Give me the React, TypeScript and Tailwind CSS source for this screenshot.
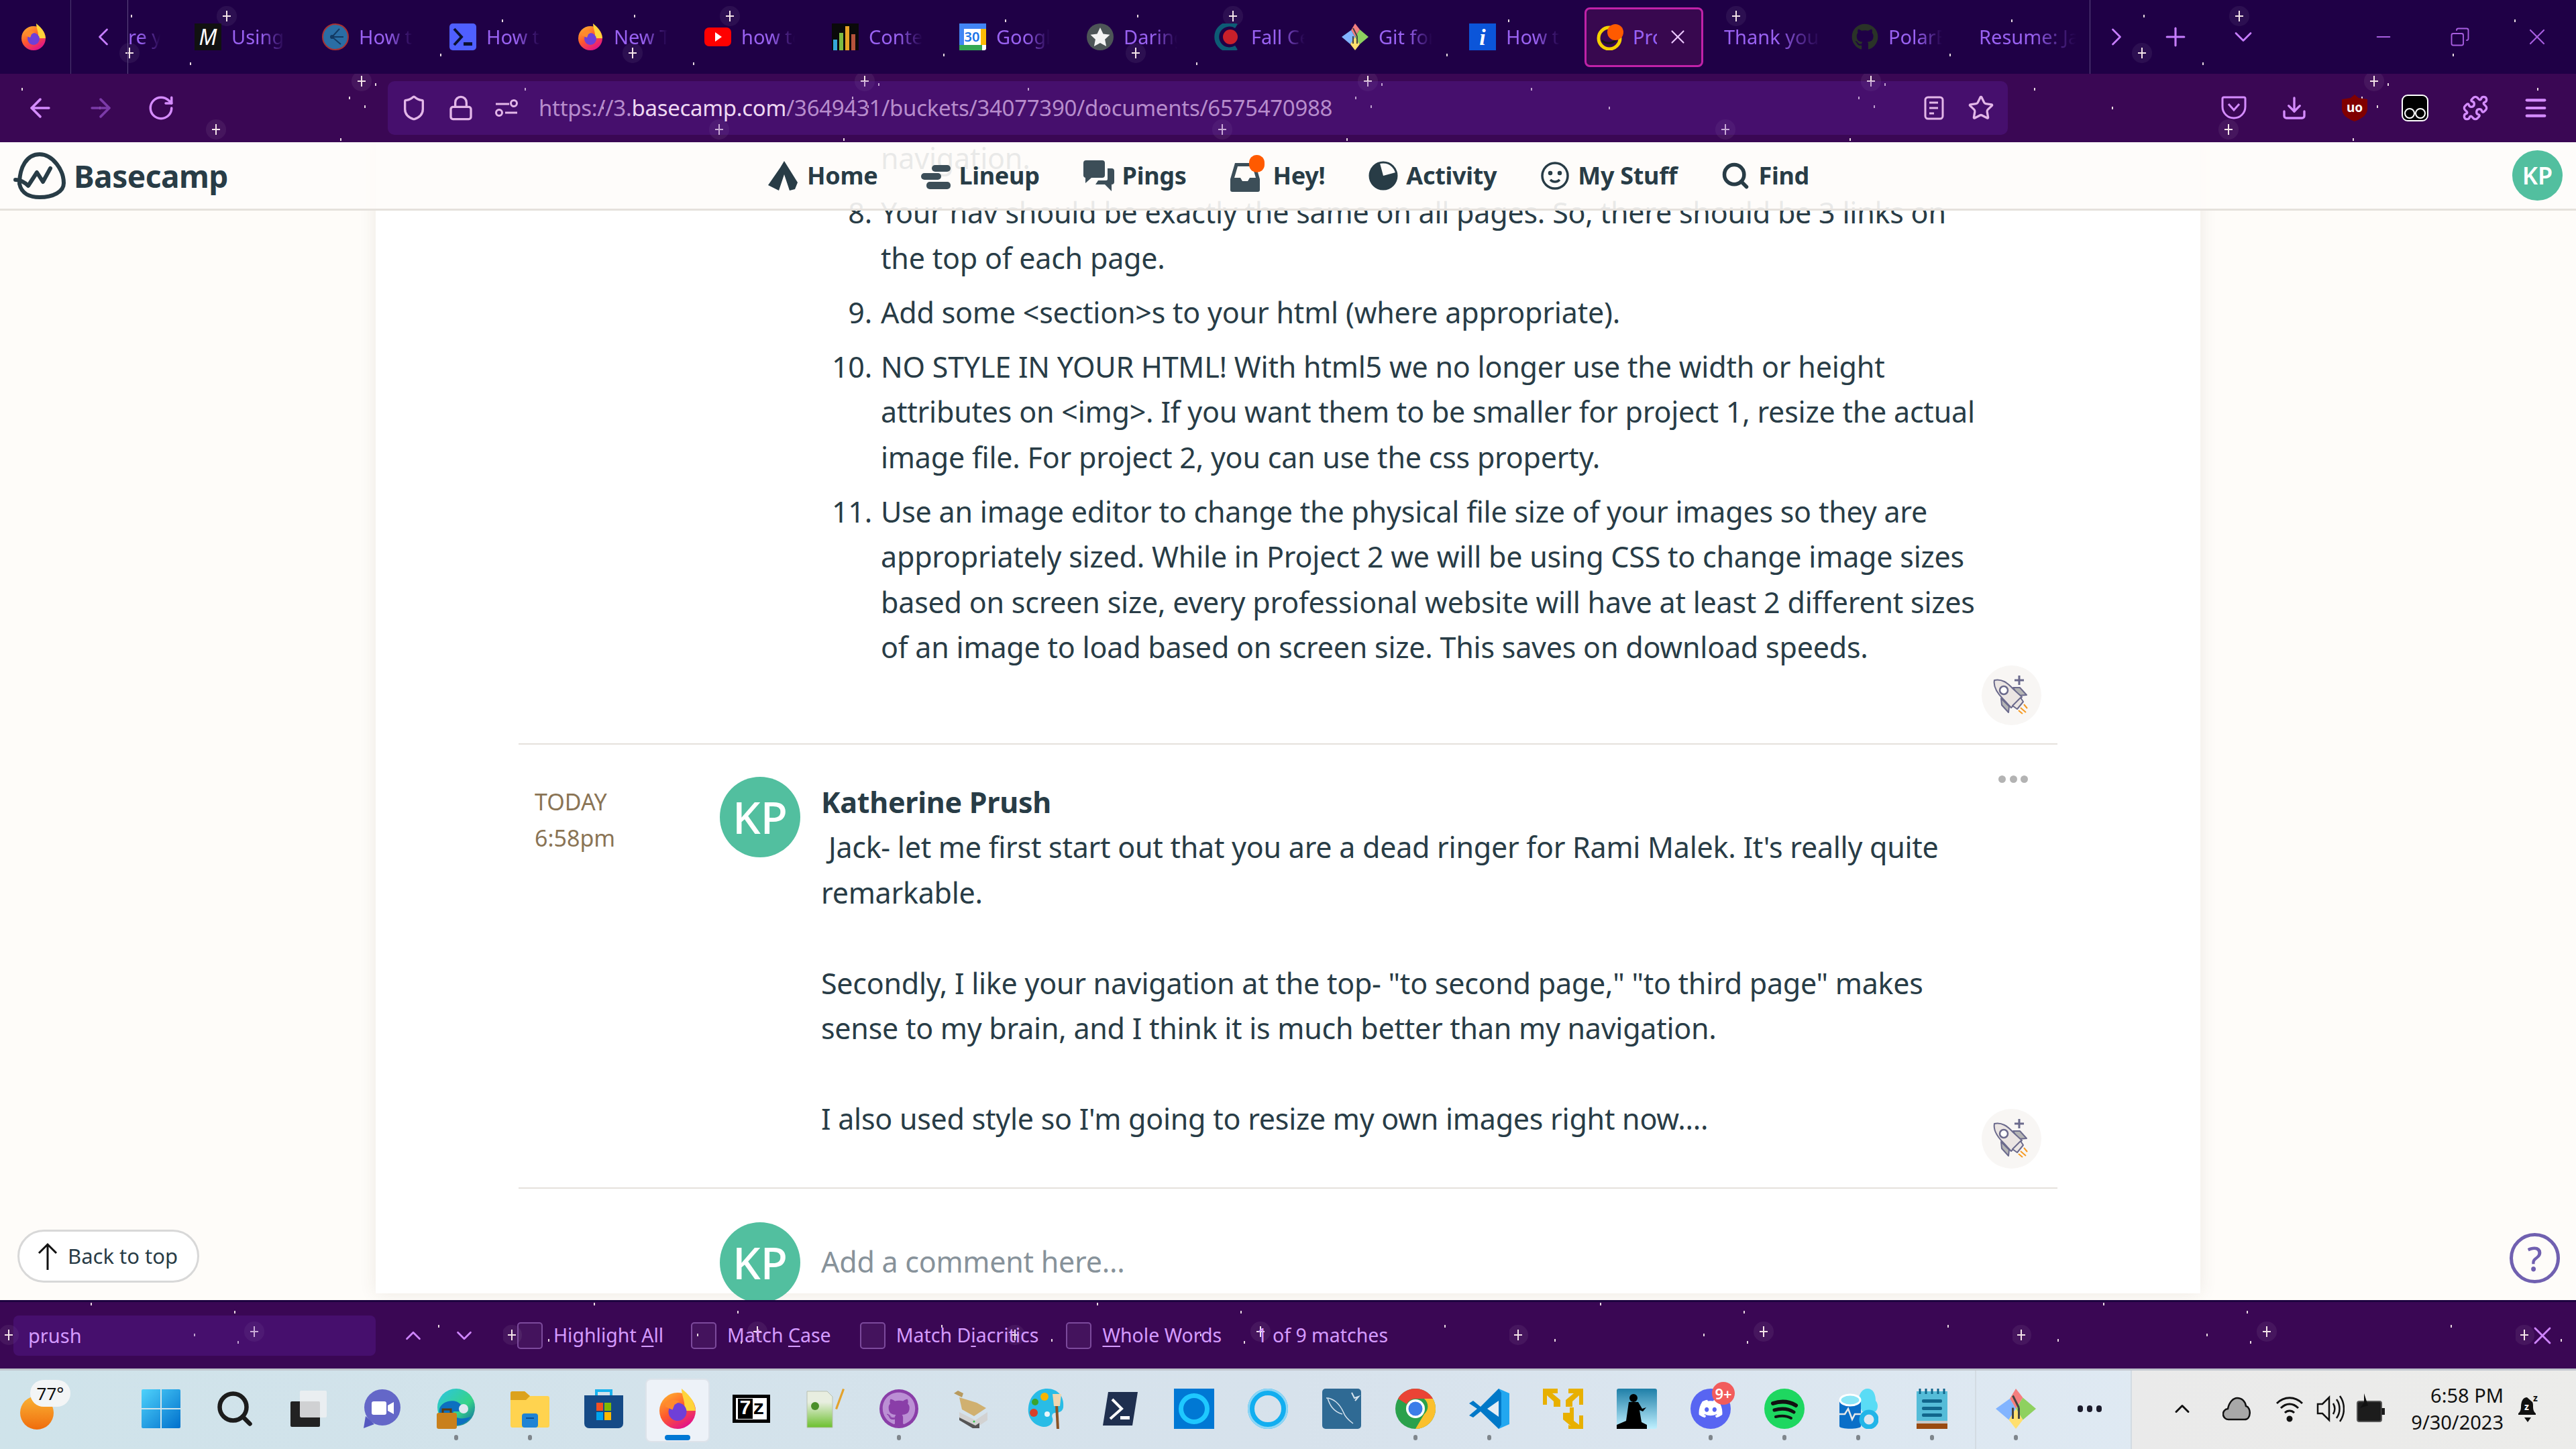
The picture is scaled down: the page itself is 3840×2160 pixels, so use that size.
import { ReactNode } from "react";
import {
  ArrowLeft,
  ArrowRight,
  ChevronDown,
  ChevronLeft,
  ChevronRight,
  ChevronUp,
  Copy,
  Download,
  Lock,
  Menu,
  Minus,
  Plus,
  Puzzle,
  RotateCw,
  Search,
  Shield,
  Star,
  X,
} from "lucide-react";
import { FaDiscord, FaGithub } from "react-icons/fa";

type Pt = [number, number];

const tabStars = { big: [[338, 24], [193, 79]] as Pt[], dots: [[196, 24], [284, 95], [749, 31], [657, 82]] as Pt[] };
const navStars = {
  big: [[539, 11], [322, 83]] as Pt[],
  dots: [[33, 23], [521, 36], [544, 49], [560, 16], [508, 98], [149, 51]] as Pt[],
};
const findStars = {
  big: [[379, 44], [13, 49]] as Pt[],
  dots: [[136, 3], [350, 15], [654, 36], [68, 57], [355, 60], [290, 49]] as Pt[],
};

const StarField = ({ id, stars, height }: { id: string; stars: { big: Pt[]; dots: Pt[] }; height: number }) => (
  <svg className="absolute inset-0 h-full w-full" aria-hidden="true">
    <defs>
      <pattern id={id} width="750" height={height} patternUnits="userSpaceOnUse">
        {stars.big.map(([x, y]) => (
          <g key={`${x}-${y}`}>
            <circle cx={x} cy={y} r="15" fill="#ffffff" opacity="0.06" />
            <path d={`M${x} ${y - 8}V${y + 8}M${x - 6} ${y}H${x + 6}`} stroke="#f4e4e8" strokeWidth="2" />
          </g>
        ))}
        {stars.dots.map(([x, y]) => (
          <rect key={`${x}-${y}`} x={x - 1} y={y - 2} width="2" height="4" fill="#e8d8e0" />
        ))}
      </pattern>
    </defs>
    <rect width="100%" height="100%" fill={`url(#${id})`} />
  </svg>
);

const Firefox = ({ size = 40 }: { size?: number }) => (
  <svg width={size} height={size} viewBox="0 0 40 40">
    <defs>
      <linearGradient id="ffx" x1="0" y1="0" x2="0.6" y2="1">
        <stop offset="0" stopColor="#ffbd2e" />
        <stop offset="0.55" stopColor="#ff5a2c" />
        <stop offset="1" stopColor="#e31587" />
      </linearGradient>
    </defs>
    <circle cx="20" cy="22" r="18" fill="url(#ffx)" />
    <path d="M24 0c6 5 13 11 14 22H26C29 15 24 8 24 0z" fill="#ffd43a" />
    <circle cx="20" cy="23" r="9" fill="#6f3fd8" />
    <path d="M8 14c4-3 9-4 14-1l-5 3-2 5-7-3z" fill="#ff8a2c" />
  </svg>
);

const MIcon = () => (
  <div className="flex h-10 w-10 items-center justify-center bg-[#111111] text-[32px] italic text-white">M</div>
);
const BlueBall = () => (
  <svg width="40" height="40" viewBox="0 0 40 40">
    <circle cx="20" cy="20" r="19" fill="#2a6ea5" stroke="#a83232" strokeWidth="2" />
    <path d="M26 8L15 20l13 11M15 20h17" stroke="#123a63" strokeWidth="2" fill="none" />
    <circle cx="15" cy="20" r="3" fill="#123a63" />
  </svg>
);
const PsTab = () => (
  <svg width="40" height="40" viewBox="0 0 40 40">
    <rect width="40" height="40" rx="5" fill="#4f5fff" />
    <path d="M7 8l11 12L7 32" stroke="#0b1030" strokeWidth="4" fill="none" />
    <rect x="21" y="28" width="13" height="5" fill="#0b1030" />
  </svg>
);
const Youtube = () => (
  <svg width="40" height="40" viewBox="0 0 40 40">
    <rect y="6" width="40" height="28" rx="7" fill="#ff0000" />
    <path d="M16 13l10 7-10 7z" fill="#ffffff" />
  </svg>
);
const Bars = () => (
  <svg width="40" height="40" viewBox="0 0 40 40">
    <rect width="40" height="40" fill="#0a0a0a" />
    <rect x="2" y="24" width="6" height="16" fill="#35a7d8" />
    <rect x="11" y="14" width="6" height="26" fill="#7dbb42" />
    <rect x="20" y="4" width="6" height="36" fill="#e8a325" />
    <rect x="29" y="16" width="6" height="24" fill="#b5533c" />
  </svg>
);
const Calendar = () => (
  <svg width="40" height="40" viewBox="0 0 40 40">
    <rect width="40" height="40" rx="3" fill="#ffffff" />
    <path d="M0 0h40v8H0z" fill="#4285f4" />
    <path d="M0 32h34v8H0z" fill="#34a853" />
    <path d="M32 8h8v24h-8z" fill="#fbbc04" />
    <path d="M0 8h7v24H0z" fill="#4285f4" />
    <text x="19" y="27" textAnchor="middle" fontSize="20" fontWeight="600" fill="#1a73e8">30</text>
  </svg>
);
const StarTab = () => (
  <svg width="40" height="40" viewBox="0 0 40 40">
    <circle cx="20" cy="20" r="20" fill="#4d5557" />
    <path d="M20 6l4.5 9.5 10 1.2-7.4 7 2 10.3L20 29l-9.100 5 2-10.300-7.400-7 10-1.200z" fill="#f3f3f3" />
  </svg>
);
const TargetTab = () => (
  <svg width="40" height="40" viewBox="0 0 40 40">
    <path d="M33 4A19 19 0 1033 36" stroke="#0d5c75" strokeWidth="7" fill="none" />
    <circle cx="24" cy="20" r="11" fill="#c8202a" />
  </svg>
);
const GitDiamond = ({ size = 40 }: { size?: number }) => (
  <svg width={size} height={size} viewBox="0 0 40 40">
    <path d="M20 0l7 9-7 11-6-10z" fill="#f57f7f" />
    <path d="M27 9l13 11-13 11-7-11z" fill="#8ed15f" />
    <path d="M14 10l6 10-7 11L0 20z" fill="#82b4ff" />
    <path d="M13 31l7-11 7 11-7 9z" fill="#ffdf6e" />
    <path d="M17 7l6 12M23 19v11M17 19v11" stroke="#444444" strokeWidth="2" fill="none" />
  </svg>
);
const InfoTab = () => (
  <div className="flex h-10 w-10 items-center justify-center bg-[#0b55d9] font-['Liberation_Serif',serif] text-[34px] font-bold italic text-white">i</div>
);
const Swirl = () => (
  <svg width="40" height="40" viewBox="0 0 40 40">
    <circle cx="19" cy="22" r="16" fill="none" stroke="#f5d000" strokeWidth="5" />
    <path d="M8 25c6 6 16 6 22-2" stroke="#161616" strokeWidth="3" fill="none" />
    <circle cx="28" cy="13" r="12" fill="#ff5a00" />
  </svg>
);
const GithubTab = () => <FaGithub className="h-10 w-10 text-[#2a3328]" />;

const tabs: { icon?: ReactNode; label: string }[] = [
  { icon: <MIcon />, label: "Using a" },
  { icon: <BlueBall />, label: "How to" },
  { icon: <PsTab />, label: "How to" },
  { icon: <Firefox />, label: "New Tab" },
  { icon: <Youtube />, label: "how to" },
  { icon: <Bars />, label: "Content" },
  { icon: <Calendar />, label: "Google" },
  { icon: <StarTab />, label: "Daring" },
  { icon: <TargetTab />, label: "Fall Ce" },
  { icon: <GitDiamond />, label: "Git for" },
  { icon: <InfoTab />, label: "How to" },
];

const Tab = ({ icon, label, wide }: { icon?: ReactNode; label: string; wide?: boolean }) => (
  <div className="relative flex w-[190px] shrink-0 items-center gap-[15px] pl-[18px]">
    {icon}
    <span
      className={`overflow-hidden whitespace-nowrap text-[29px] text-[#9a62f2] [mask-image:linear-gradient(to_right,black_55%,transparent)] ${
        wide ? "w-[145px]" : "w-[80px]"
      }`}
    >
      {label}
    </span>
  </div>
);

const TabBar = () => (
  <div className="relative flex h-[110px] shrink-0 bg-[#1f0046]">
    <StarField id="tabstars" stars={tabStars} height={110} />
    <div className="relative flex w-[106px] items-center justify-center border-r border-[#4d3a70] pr-[6px]">
      <Firefox />
    </div>
    <div className="relative flex w-[85px] items-center border-r border-[#5d4a80] pl-[26px] text-[#c77dff]">
      <ChevronLeft size={44} strokeWidth={1.5} />
    </div>
    <div className="relative flex w-[2925px] items-center overflow-hidden border-r border-[#5d4a80]">
      <div className="w-[81px] shrink-0">
        <div className="w-[48px] overflow-hidden whitespace-nowrap text-[29px] text-[#9a62f2] [mask-image:linear-gradient(to_right,black_40%,transparent)]">re you</div>
      </div>
      {tabs.map((t, i) => (
        <Tab key={i} icon={t.icon} label={t.label} />
      ))}
      <div className="flex h-[89px] w-[177px] shrink-0 items-center gap-[14px] rounded-[8px] border-[3px] border-[#c022a8] bg-[#38084f] pl-[15px]">
        <Swirl />
        <span className="w-[36px] overflow-hidden whitespace-nowrap text-[29px] text-[#9a62f2]">Proj</span>
        <X size={34} strokeWidth={1.5} className="text-[#ecc8ff]" />
      </div>
      <div className="w-[13px] shrink-0" />
      <Tab label="Thank you" wide />
      <Tab icon={<GithubTab />} label="PolarBear" />
      <Tab label="Resume: Jack" wide />
    </div>
    <div className="relative flex flex-1 items-center text-[#c77dff]">
      <div className="flex w-[78px] justify-center"><ChevronRight size={44} strokeWidth={1.5} /></div>
      <div className="flex w-[98px] justify-center"><Plus size={44} strokeWidth={1.7} /></div>
      <div className="flex w-[104px] justify-center"><ChevronDown size={44} strokeWidth={1.5} /></div>
      <div className="ml-auto flex w-[114px] justify-center text-[#a85ee0]"><Minus size={32} strokeWidth={1.5} /></div>
      <div className="flex w-[114px] justify-center text-[#a85ee0]"><Copy size={30} strokeWidth={1.5} className="-scale-x-100" /></div>
      <div className="flex w-[116px] justify-center text-[#a85ee0]"><X size={40} strokeWidth={1.3} /></div>
    </div>
  </div>
);

const Reader = () => (
  <svg width="36" height="36" viewBox="0 0 36 36" fill="none" stroke="#e3b7e8" strokeWidth="3">
    <rect x="5" y="2" width="26" height="32" rx="4" />
    <path d="M11 10h13M11 18h13M11 26h7" />
  </svg>
);
const Sliders = () => (
  <svg width="36" height="36" viewBox="0 0 36 36" fill="none" stroke="#e3b7e8" strokeWidth="3">
    <path d="M2 12h20M16 25h18" />
    <circle cx="29" cy="11" r="4.500" />
    <circle cx="7" cy="25" r="4.500" />
  </svg>
);
const Pocket = () => (
  <svg width="38" height="38" viewBox="0 0 38 38" fill="none" stroke="#d58cff" strokeWidth="3">
    <path d="M4 4h30a2 2 0 012 2v12c0 10-8 17-17 17S2 28 2 18V6a2 2 0 012-2z" />
    <path d="M11 14l8 9 8-9" />
  </svg>
);
const Ublock = () => (
  <svg width="38" height="40" viewBox="0 0 38 40">
    <path d="M19 0l6 5 13 2v14c0 9-8 15-19 19C8 36 0 30 0 21V7l13-2z" fill="#800000" />
    <text x="19" y="26" textAnchor="middle" fontSize="19" fontWeight="700" fill="#ffffff">uo</text>
  </svg>
);
const Glasses = () => (
  <svg width="40" height="40" viewBox="0 0 40 40">
    <rect x="1" y="1" width="38" height="38" rx="8" fill="#000000" stroke="#ffffff" strokeWidth="2" />
    <circle cx="12" cy="28" r="7" fill="none" stroke="#ffffff" strokeWidth="2" />
    <circle cx="28" cy="28" r="7" fill="none" stroke="#ffffff" strokeWidth="2" />
  </svg>
);

const navRight: ReactNode[] = [
  <Pocket key="pocket" />,
  <Download key="dl" size={40} strokeWidth={2} />,
  <Ublock key="ub" />,
  <Glasses key="gl" />,
  <Puzzle key="pz" size={40} strokeWidth={2} />,
  <Menu key="menu" size={40} strokeWidth={2.5} />,
];

const NavBar = () => (
  <div className="relative flex h-[102px] shrink-0 items-center bg-[#3a0754] text-[#d58cff]">
    <StarField id="navstars" stars={navStars} height={102} />
    <div className="relative ml-[15px] flex w-[90px] justify-center"><ArrowLeft size={44} strokeWidth={2} /></div>
    <div className="relative flex w-[90px] justify-center text-[#7b3aa8]"><ArrowRight size={44} strokeWidth={2} /></div>
    <div className="relative flex w-[90px] justify-center"><RotateCw size={42} strokeWidth={2} /></div>
    <div className="relative ml-[293px] flex h-[80px] w-[2415px] items-center rounded-[10px] bg-[#6423aa]/30 text-[#e3b7e8]">
      <div className="ml-[19px] flex w-[70px]"><Shield size={40} strokeWidth={2} /></div>
      <div className="flex w-[70px]"><Lock size={40} strokeWidth={2} /></div>
      <div className="flex w-[66px]"><Sliders /></div>
      <span className="whitespace-nowrap text-[33px] tracking-[-0.3px] text-[#b78ccc]">
        https://3.<span className="text-[#eed8f2]">basecamp.com</span>/3649431/buckets/34077390/documents/6575470988
      </span>
      <div className="ml-auto flex w-[70px] justify-center"><Reader /></div>
      <div className="mr-[5px] flex w-[70px] justify-center"><Star size={40} strokeWidth={2} /></div>
    </div>
    <div className="relative ml-[292px] flex">
      {navRight.map((icon, i) => (
        <div key={i} className="flex w-[90px] justify-center">{icon}</div>
      ))}
    </div>
  </div>
);

const BasecampLogo = () => (
  <svg width="78" height="70" viewBox="0 0 78 70" fill="none" stroke="#283c46" strokeWidth="6" strokeLinecap="round" strokeLinejoin="round">
    <path d="M9 47C9 22 20 3 39 3c20 0 36 24 36 43 0 13-16 21-36 21-14 0-27-5-30-20" />
    <path d="M3 41c8 0 14 4 19 9l13-20 9 14 11-20" />
  </svg>
);

const HomeIcon = () => (
  <svg width="48" height="48" viewBox="0 0 48 48">
    <path d="M26 2l20 32-4 10-8 2-8-24-8 24-16-8L20 12z" fill="#283c46" />
  </svg>
);
const LineupIcon = () => (
  <svg width="44" height="44" viewBox="0 0 44 44" fill="#3c4e58">
    <rect x="16" y="6" width="28" height="10" rx="5" />
    <rect y="18" width="30" height="10" rx="5" />
    <rect x="8" y="31" width="36" height="11" rx="5" />
  </svg>
);
const PingsIcon = () => (
  <svg width="46" height="46" viewBox="0 0 46 46" fill="#3c4e58">
    <path d="M4 0h24a4 4 0 014 4v18a4 4 0 01-4 4H12l-9 8V26a4 4 0 01-3-4V4a4 4 0 014-4z" />
    <path d="M36 12h6a4 4 0 014 4v16a4 4 0 01-4 4v10l-10-10H18l4-6h12a2 2 0 002-2z" />
  </svg>
);
const HeyIcon = () => (
  <div className="relative h-[50px] w-[52px]">
    <svg width="46" height="46" viewBox="0 0 46 46" className="absolute bottom-0 left-0">
      <path d="M8 2h30l7 24v16a3 3 0 01-3 3H4a3 3 0 01-3-3V26z" fill="#3c4e58" />
      <path d="M12 7h22l5 17H30l-3 5h-8l-3-5H7z" fill="#fefcf9" />
    </svg>
    <div className="absolute -top-[6px] right-0 h-[26px] w-[23px] rounded-full bg-[#ff5a00]" />
  </div>
);
const ActivityIcon = () => (
  <svg width="44" height="44" viewBox="0 0 44 44">
    <circle cx="22" cy="22" r="20" fill="none" stroke="#283c46" strokeWidth="3" />
    <path d="M22 2a20 20 0 1020 20H22z" fill="#283c46" transform="rotate(-15 22 22)" />
  </svg>
);
const StuffIcon = () => (
  <svg width="44" height="44" viewBox="0 0 44 44" fill="none" stroke="#283c46" strokeWidth="3.500">
    <circle cx="22" cy="22" r="19" />
    <circle cx="15" cy="18" r="1.500" />
    <circle cx="29" cy="18" r="1.500" />
    <path d="M15 28c4 4 10 4 14 0" />
  </svg>
);

const navItems: { icon: ReactNode; label: string }[] = [
  { icon: <HomeIcon />, label: "Home" },
  { icon: <LineupIcon />, label: "Lineup" },
  { icon: <PingsIcon />, label: "Pings" },
  { icon: <HeyIcon />, label: "Hey!" },
  { icon: <ActivityIcon />, label: "Activity" },
  { icon: <StuffIcon />, label: "My Stuff" },
  { icon: <Search size={44} strokeWidth={3} className="text-[#283c46]" />, label: "Find" },
];

const Header = () => (
  <div className="absolute inset-x-0 top-0 z-10 grid h-[102px] grid-cols-[1fr_auto_1fr] items-center border-b-[3px] border-[#e5e1dc] bg-[#fefcf9]/90">
    <div className="flex items-center gap-[12px] pl-[20px]">
      <BasecampLogo />
      <span className="text-[46px] font-bold leading-none tracking-[-0.5px] text-[#283c46]">Basecamp</span>
    </div>
    <div className="flex items-center gap-[65px]">
      {navItems.map((item) => (
        <div key={item.label} className="flex items-center gap-[12px]">
          {item.icon}
          <span className="whitespace-nowrap text-[36px] font-bold tracking-[-0.3px] text-[#283c46]">{item.label}</span>
        </div>
      ))}
    </div>
    <div className="flex justify-end pr-[20px]">
      <div className="flex h-[75px] w-[75px] items-center justify-center rounded-full bg-[#52bf9f] text-[36px] font-semibold text-white">KP</div>
    </div>
  </div>
);

const listItems: { n: string; lines: string[] }[] = [
  { n: "", lines: ["navigation."] },
  { n: "8.", lines: ["Your nav should be exactly the same on all pages. So, there should be 3 links on", "the top of each page."] },
  { n: "9.", lines: ["Add some <section>s to your html (where appropriate)."] },
  {
    n: "10.",
    lines: [
      "NO STYLE IN YOUR HTML! With html5 we no longer use the width or height",
      "attributes on <img>. If you want them to be smaller for project 1, resize the actual",
      "image file. For project 2, you can use the css property.",
    ],
  },
  {
    n: "11.",
    lines: [
      "Use an image editor to change the physical file size of your images so they are",
      "appropriately sized. While in Project 2 we will be using CSS to change image sizes",
      "based on screen size, every professional website will have at least 2 different sizes",
      "of an image to load based on screen size. This saves on download speeds.",
    ],
  },
];

const commentLines = [
  "\u00a0Jack- let me first start out that you are a dead ringer for Rami Malek. It's really quite",
  "remarkable.",
  "",
  'Secondly, I like your navigation at the top- "to second page," "to third page" makes',
  "sense to my brain, and I think it is much better than my navigation.",
  "",
  "I also used style so I'm going to resize my own images right now....",
];

const Rocket = () => (
  <div className="h-[89px] w-[89px] shrink-0 rounded-full bg-[#f8f6f4]">
    <svg width="89" height="89" viewBox="0 0 89 89" stroke="#6b6a8c" strokeWidth="2" strokeLinejoin="round">
      <path d="M47 33l10 0 10 11-13 1z" fill="#b5b5b5" />
      <path d="M29 49l1 10 10 11 1-9z" fill="#b5b5b5" />
      <path d="M19 22c11-2 19 3 28 13l13 12-16 16-12-13C24 42 17 32 19 22z" fill="#ebe5e3" />
      <path d="M58 48l4 6-9 11-7-5z" fill="#ebe5e3" />
      <circle cx="33" cy="37" r="6" fill="#ffffff" strokeWidth="2.500" />
      <path d="M56 15v14M49 22h14" strokeWidth="3" fill="none" />
      <path d="M55 67l6 5M58 63l8 7M63 58l5 6" stroke="#f59a23" strokeWidth="2" fill="none" />
    </svg>
  </div>
);

const Avatar = () => (
  <div className="flex h-[120px] w-[120px] shrink-0 items-center justify-center rounded-full bg-[#52bf9f] text-[66px] font-medium text-white">KP</div>
);

const Card = () => (
  <div className="mx-auto h-full w-[2720px] bg-white px-[213px] shadow-[0_0_24px_rgba(90,70,40,0.1)]">
    <div className="-mt-[10px] flex flex-col gap-[13.5px] text-[43px] leading-[67.5px] tracking-[-0.22px] text-[#283c46]">
      {listItems.map((item, i) => (
        <div key={i} className="flex whitespace-nowrap">
          <div className="ml-[457px] mr-[13px] w-[70px] text-right">{item.n}</div>
          <div>
            {item.lines.map((line) => (
              <div key={line}>{line}</div>
            ))}
          </div>
        </div>
      ))}
    </div>
    <div className="-mt-[7px] flex justify-end pr-[24px]">
      <Rocket />
    </div>
    <div className="mt-[27px] flex border-t-2 border-[#e5e1dc] pb-[28px] pl-[24px] pr-[24px] pt-[46px]">
      <div className="mt-[12px] w-[276px] shrink-0 text-[34px] leading-[54px] text-[#8a7455]">
        <div>TODAY</div>
        <div>6:58pm</div>
      </div>
      <div className="mt-[2px]"><Avatar /></div>
      <div className="ml-[31px] mt-[6px] flex-1 whitespace-nowrap pb-[40px] text-[43px] leading-[67.5px] tracking-[-0.26px] text-[#283c46]">
        <div className="font-bold">Katherine Prush</div>
        {commentLines.map((line, i) => (
          <div key={i} className="h-[67.5px]">{line}</div>
        ))}
      </div>
      <div className="flex flex-col items-end justify-between">
        <div className="mr-[20px] flex gap-[5.5px]">
          <span className="h-[11px] w-[11px] rounded-full bg-[#b3b3b3]" />
          <span className="h-[11px] w-[11px] rounded-full bg-[#b3b3b3]" />
          <span className="h-[11px] w-[11px] rounded-full bg-[#b3b3b3]" />
        </div>
        <Rocket />
      </div>
    </div>
    <div className="flex items-center border-t-2 border-[#e5e1dc] pl-[300px] pt-[50px]">
      <Avatar />
      <span className="ml-[31px] text-[43px] tracking-[-0.26px] text-[#87929a]">Add a comment here...</span>
    </div>
  </div>
);

const MainArea = () => (
  <div className="relative min-h-0 flex-1 overflow-hidden bg-[#fefcf9]">
    <Header />
    <Card />
    <div className="absolute left-[26px] top-[1621px] z-10 flex h-[79px] w-[271px] items-center gap-[14px] rounded-full border-[3px] border-[#d8d8d8] bg-white pl-[26px] text-[31px] text-[#283c46]">
      <svg width="32" height="42" viewBox="0 0 32 42" fill="none" stroke="#111111" strokeWidth="3">
        <path d="M16 41V3M3 16L16 3l13 13" />
      </svg>
      Back to top
    </div>
    <div className="absolute left-[3741px] top-[1626px] z-10 flex h-[75px] w-[75px] items-center justify-center rounded-full border-[5px] border-[#7060b0] text-[50px] font-medium leading-none text-[#7060b0]">?</div>
  </div>
);

const findOptions: { before: string; key: string; after: string; gap: number }[] = [
  { before: "Highlight ", key: "A", after: "ll", gap: 0 },
  { before: "Match ", key: "C", after: "ase", gap: 41 },
  { before: "Match D", key: "i", after: "acritics", gap: 43 },
  { before: "", key: "W", after: "hole Words", gap: 41 },
];

const FindBar = () => (
  <div className="relative flex h-[102px] shrink-0 items-center border-t-[3px] border-[#1c0340] bg-[#3a0754] text-[28.5px] text-[#d59bff]">
    <StarField id="findstars" stars={findStars} height={102} />
    <div className="relative ml-[20px] flex h-[60px] w-[540px] items-center rounded-[8px] bg-[#6423aa]/30 pl-[22px] text-[29px]">prush</div>
    <div className="relative ml-[18px] flex w-[76px] justify-center text-[#cf85ff]"><ChevronUp size={38} strokeWidth={1.7} /></div>
    <div className="relative flex w-[76px] justify-center text-[#cf85ff]"><ChevronDown size={38} strokeWidth={1.7} /></div>
    <div className="relative ml-[-10px] flex items-center pl-[51px]">
      {findOptions.map((opt) => (
        <div key={opt.key} className="flex items-center gap-[16px] whitespace-nowrap" style={{ marginLeft: opt.gap }}>
          <span className="h-[40px] w-[38px] rounded-[5px] border-[2px] border-[#7c4a9c] bg-[#ffffff]/5" />
          <span>
            {opt.before}
            <span className="underline underline-offset-[5px]">{opt.key}</span>
            {opt.after}
          </span>
        </div>
      ))}
      <span className="ml-[52px] whitespace-nowrap">1 of 9 matches</span>
    </div>
    <div className="relative ml-auto mr-[28px] text-[#cf85ff]"><X size={44} strokeWidth={1.5} /></div>
  </div>
);

const Start = () => (
  <svg width="58" height="58" viewBox="0 0 58 58">
    <defs>
      <linearGradient id="win" x1="0" y1="0" x2="1" y2="1">
        <stop offset="0" stopColor="#4fd2fb" />
        <stop offset="1" stopColor="#0070cc" />
      </linearGradient>
    </defs>
    <path d="M0 2a2 2 0 012-2h26v28H0zM30 0h26a2 2 0 012 2v26H30zM0 30h28v28H2a2 2 0 01-2-2zM30 30h28v26a2 2 0 01-2 2H30z" fill="url(#win)" />
  </svg>
);
const TaskView = () => (
  <svg width="58" height="58" viewBox="0 0 58 58">
    <rect x="2" y="18" width="44" height="38" rx="2" fill="#222222" />
    <rect x="16" y="2" width="40" height="40" rx="2" fill="#eef0f2" opacity="0.85" />
  </svg>
);
const Meet = () => (
  <svg width="58" height="58" viewBox="0 0 58 58">
    <circle cx="29" cy="27" r="27" fill="#6467c8" />
    <path d="M4 40l-3 18 16-6z" fill="#5458c0" />
    <rect x="13" y="18" width="22" height="20" rx="3" fill="#ffffff" />
    <path d="M37 24l9-5v18l-9-5z" fill="#ffffff" />
  </svg>
);
const Edge = () => (
  <svg width="60" height="60" viewBox="0 0 60 60">
    <defs>
      <linearGradient id="edg" x1="0" y1="0" x2="1" y2="1">
        <stop offset="0" stopColor="#2bc4e4" />
        <stop offset="0.6" stopColor="#37d487" />
        <stop offset="1" stopColor="#0c5ea8" />
      </linearGradient>
    </defs>
    <circle cx="30" cy="28" r="28" fill="url(#edg)" />
    <path d="M5 30c4-12 24-16 32-6 3 4 2 8-2 10H26c-3 8 8 14 26 8-8 12-22 16-34 10C8 46 3 40 5 30z" fill="#0c6fc0" />
    <circle cx="41" cy="30" r="7" fill="#dfe8f0" />
    <rect x="1" y="36" width="30" height="24" rx="3" fill="#c9801c" />
    <path d="M10 36v-5h12v5" stroke="#5a3a10" strokeWidth="3" fill="none" />
  </svg>
);
const Explorer = () => (
  <svg width="58" height="58" viewBox="0 0 58 58">
    <path d="M0 6a3 3 0 013-3h18l8 7h26a3 3 0 013 3v41a3 3 0 01-3 3H3a3 3 0 01-3-3z" fill="#ffd34f" />
    <path d="M0 6a3 3 0 013-3h18l8 7-6 6H0z" fill="#dca21c" />
    <rect x="17" y="36" width="24" height="21" rx="4" fill="#1f83d4" />
    <path d="M23 43h12" stroke="#0b4f90" strokeWidth="2" />
  </svg>
);
const Store = () => (
  <svg width="58" height="60" viewBox="0 0 58 60">
    <path d="M18 12V3h22v9" stroke="#18b2ee" strokeWidth="4" fill="none" />
    <path d="M0 10h58v42a7 7 0 01-7 7H7a7 7 0 01-7-7z" fill="#154a86" />
    <rect x="18" y="21" width="10" height="12" fill="#f25022" />
    <rect x="30" y="21" width="10" height="12" fill="#7fba00" />
    <rect x="18" y="35" width="10" height="12" fill="#00a4ef" />
    <rect x="30" y="35" width="10" height="12" fill="#ffb900" />
  </svg>
);
const SevenZip = () => (
  <div className="flex h-[42px] w-[56px] items-center justify-center border-[5px] border-black bg-white">
    <span className="bg-black px-[2px] font-['Liberation_Mono',monospace] text-[30px] font-bold leading-none text-white">7</span>
    <span className="font-['Liberation_Mono',monospace] text-[30px] font-bold leading-none text-black">z</span>
  </div>
);
const NotepadPP = () => (
  <svg width="58" height="60" viewBox="0 0 58 60">
    <defs>
      <linearGradient id="npp" x1="0" y1="0" x2="0" y2="1">
        <stop offset="0.3" stopColor="#e8eee0" />
        <stop offset="1" stopColor="#6cc02e" />
      </linearGradient>
    </defs>
    <path d="M2 4h30l8 8v46H2z" fill="url(#npp)" stroke="#b9c0b0" />
    <path d="M44 30l11-30 3 1-11 30z" fill="#e3a22c" />
    <circle cx="14" cy="26" r="6" fill="#4b8f2a" />
  </svg>
);
const GithubDesktop = () => (
  <div className="flex h-[58px] w-[58px] items-center justify-center rounded-full bg-[#8a3ea8]">
    <FaGithub className="h-[50px] w-[50px] text-[#bb8fd4]" />
  </div>
);
const Printer = () => (
  <svg width="56" height="58" viewBox="0 0 56 58">
    <path d="M0 6l6-4 8 4-2 6z" fill="#b89a5e" />
    <path d="M8 12l26 8 14 8-18 12-18-10z" fill="#d0b070" />
    <path d="M8 34l24 12 18-12v12L32 58 8 46z" fill="#d2d2d2" />
    <path d="M8 42l24 12 6-4v8H28L8 46z" fill="#555555" />
    <circle cx="30" cy="48" r="1.500" fill="#35c24a" />
  </svg>
);
const Paint = () => (
  <svg width="58" height="60" viewBox="0 0 58 60">
    <path d="M30 0c16 0 26 12 24 28-1 6-6 8-12 8-4 0-6 4-4 8 2 6-4 14-14 13C10 55 0 43 2 28 4 10 16 0 30 0z" fill="#29bce6" />
    <circle cx="26" cy="12" r="6" fill="#f7b500" />
    <circle cx="12" cy="20" r="5" fill="#3aa32c" />
    <circle cx="10" cy="36" r="6" fill="#d8402a" />
    <circle cx="30" cy="38" r="4" fill="#eaf6fb" />
    <path d="M44 24l2 36" stroke="#8a5324" strokeWidth="4" />
    <path d="M38 8h13l-2 18h-9z" fill="#f0d6b0" />
  </svg>
);
const PowerShell = () => (
  <svg width="56" height="54" viewBox="0 0 56 54">
    <path d="M10 2h44L46 52H2z" fill="#1f2f4f" />
    <path d="M16 13l14 14-17 15" stroke="#ffffff" strokeWidth="4" fill="none" />
    <rect x="28" y="38" width="14" height="5" fill="#ffffff" />
  </svg>
);
const Alexa = () => (
  <div className="flex h-[60px] w-[60px] items-center justify-center bg-[#0078d4]">
    <div className="h-[46px] w-[46px] rounded-full border-[7px] border-[#1ec8ff]" />
  </div>
);
const Cortana = () => <div className="h-[60px] w-[60px] rounded-full border-[10px] border-[#12aef0] outline-[3px] -outline-offset-[3px] outline-[#8ed6f5]" />;
const Mysql = () => (
  <svg width="58" height="60" viewBox="0 0 58 60">
    <rect width="58" height="60" rx="5" fill="#2f6a94" />
    <path d="M6 14c10 0 20 8 26 22 2 6 6 10 14 16M8 14c3 10 8 20 22 24" stroke="#d5e3ee" strokeWidth="1.500" fill="none" />
    <path d="M44 6l4 8 6-2-5 6" stroke="#d5e3ee" strokeWidth="2" fill="none" />
  </svg>
);
const Chrome = () => (
  <svg width="60" height="60" viewBox="0 0 60 60">
    <circle cx="30" cy="30" r="30" fill="#2aa14c" />
    <path d="M30 0a30 30 0 0126 15H30a15 15 0 00-13 8L4 15A30 30 0 0130 0z" fill="#ea4335" />
    <path d="M56 15a30 30 0 01-26 45l13-22a15 15 0 000-23z" fill="#fbc02d" />
    <circle cx="30" cy="30" r="14" fill="#ffffff" />
    <circle cx="30" cy="30" r="10.500" fill="#3b7de9" />
  </svg>
);
const Vscode = () => (
  <svg width="60" height="60" viewBox="0 0 60 60">
    <path d="M44 0l16 7v46l-16 7z" fill="#22a7f0" />
    <path d="M44 0L17 27 6 18l-6 4 12 8L0 40l6 3 11-9 27 26 4-6V6z" fill="#0078c8" />
    <path d="M44 18v24L27 30z" fill="#e4edf5" />
  </svg>
);
const YellowApp = () => (
  <svg width="60" height="60" viewBox="0 0 60 60" fill="#e8b000">
    <path d="M0 0h22v7H14l12 10v10H16v-8L6 10v14H0zM38 0h22v24h-6V10L44 19v8H34V17L46 7h-8zM30 36h10v-8h6v20l8 6V40h6v20H38v-6l4 2-12-10z" />
  </svg>
);
const Kindle = () => (
  <svg width="60" height="60" viewBox="0 0 60 60">
    <defs>
      <linearGradient id="knd" x1="0" y1="0" x2="0" y2="1">
        <stop offset="0" stopColor="#1f7fa8" />
        <stop offset="1" stopColor="#bff0ff" />
      </linearGradient>
    </defs>
    <rect width="60" height="60" rx="3" fill="url(#knd)" />
    <circle cx="25" cy="14" r="6" fill="#000000" />
    <path d="M18 20h14l6 10 6-2-5 6-5-2 3 18 8 4v6H0v-6l14-6 2-14z" fill="#000000" />
  </svg>
);
const Discord = () => (
  <div className="relative flex h-[60px] w-[60px] items-center justify-center rounded-full bg-[#5865f2]">
    <FaDiscord className="h-[38px] w-[38px] text-white" />
    <div className="absolute -right-[6px] -top-[10px] flex h-[34px] w-[34px] items-center justify-center rounded-full bg-[#f25c5c] text-[22px] font-semibold text-white">9+</div>
  </div>
);
const Spotify = () => (
  <svg width="60" height="60" viewBox="0 0 60 60" fill="none" stroke="#111111" strokeLinecap="round">
    <circle cx="30" cy="30" r="30" fill="#1ed760" stroke="none" />
    <path d="M13 22c12-4 24-3 34 3" strokeWidth="6" />
    <path d="M15 32c10-3 21-2 29 3" strokeWidth="5" />
    <path d="M17 42c8-2 16-2 23 2" strokeWidth="4" />
  </svg>
);
const Azure = () => (
  <svg width="60" height="60" viewBox="0 0 60 60">
    <path d="M30 22c0-14 6-22 14-22s12 8 12 18c4 4 4 12 0 16H36z" fill="#5adcf5" />
    <path d="M2 18h32v38c0 5-32 5-32 0z" fill="#0a6fc8" />
    <ellipse cx="18" cy="17" rx="15" ry="8" fill="#8be6f7" stroke="#ffffff" strokeWidth="3" />
    <path d="M2 38h8l5-8 6 16 4-8h9" stroke="#e8e8e8" strokeWidth="2.500" fill="none" />
    <circle cx="46" cy="46" r="11" fill="none" stroke="#22b5e8" strokeWidth="7" />
  </svg>
);
const Notepad = () => (
  <svg width="46" height="60" viewBox="0 0 46 60">
    <rect y="4" width="46" height="56" fill="#55bcd8" />
    <rect y="48" width="46" height="4" fill="#c8c8c8" />
    <rect y="52" width="46" height="8" fill="#9a4a10" />
    <path d="M5 0v8M14 0v8M23 0v8M32 0v8M41 0v8" stroke="#11668c" strokeWidth="3" />
    <rect x="8" y="16" width="30" height="5" rx="2" fill="#11668c" />
    <rect x="8" y="27" width="30" height="5" rx="2" fill="#11668c" />
    <rect x="8" y="37" width="30" height="5" rx="2" fill="#11668c" />
  </svg>
);

const taskIcons: { icon: ReactNode; dot?: boolean; active?: boolean }[] = [
  { icon: <Start /> },
  { icon: <Search size={60} strokeWidth={2.6} className="text-[#1c1c1c]" /> },
  { icon: <TaskView /> },
  { icon: <Meet /> },
  { icon: <Edge />, dot: true },
  { icon: <Explorer />, dot: true },
  { icon: <Store /> },
  { icon: <Firefox size={60} />, active: true },
  { icon: <SevenZip /> },
  { icon: <NotepadPP /> },
  { icon: <GithubDesktop />, dot: true },
  { icon: <Printer /> },
  { icon: <Paint /> },
  { icon: <PowerShell /> },
  { icon: <Alexa /> },
  { icon: <Cortana /> },
  { icon: <Mysql /> },
  { icon: <Chrome />, dot: true },
  { icon: <Vscode />, dot: true },
  { icon: <YellowApp /> },
  { icon: <Kindle /> },
  { icon: <Discord />, dot: true },
  { icon: <Spotify />, dot: true },
  { icon: <Azure />, dot: true },
  { icon: <Notepad />, dot: true },
];

const TaskIcon = ({ icon, dot, active }: { icon: ReactNode; dot?: boolean; active?: boolean }) => (
  <div className="relative flex h-full w-[110px] shrink-0 items-center justify-center pb-[3px]">
    {active && <div className="absolute bottom-[10px] left-[7px] top-[12px] w-[96px] rounded-[8px] border-[2px] border-[#dde3ea] bg-[#edf2f8]" />}
    <div className="relative">{icon}</div>
    {dot && <div className="absolute bottom-[13px] left-[52px] h-[8px] w-[6px] rounded-full bg-[#7f868c]" />}
    {active && <div className="absolute bottom-[13px] left-[36px] h-[8px] w-[38px] rounded-full bg-[#0078d4]" />}
  </div>
);

const Tray = () => (
  <div className="flex h-full flex-1 items-center border-l-2 border-[#d3dbe2] pb-[3px] text-[#111111]">
    <ChevronUp size={36} strokeWidth={2} className="ml-[57px]" />
    <svg width="42" height="36" viewBox="0 0 42 36" className="ml-[42px]">
      <path d="M10 34a8 8 0 01-2-16C10 8 16 2 22 2c7 0 12 5 13 12 8 2 8 20-2 20z" fill="#a8a8a8" stroke="#111111" strokeWidth="2.500" />
    </svg>
    <svg width="42" height="44" viewBox="0 0 42 44" fill="none" stroke="#111111" strokeWidth="3" className="ml-[37px]">
      <path d="M2 14c11-11 27-11 38 0M8 21c8-8 18-8 26 0M14 28c4-4 10-4 14 0" />
      <circle cx="21" cy="37" r="3" fill="#111111" />
    </svg>
    <svg width="42" height="46" viewBox="0 0 42 46" fill="none" stroke="#111111" strokeWidth="2.500" className="ml-[19px]">
      <path d="M2 16h7l10-10v34L9 30H2z" />
      <path d="M25 15c3 5 3 11 0 16M30 9c6 8 6 20 0 28M35 4c8 11 8 27 0 38" />
    </svg>
    <svg width="44" height="46" viewBox="0 0 44 46" className="ml-[17px]">
      <rect x="2" y="12" width="36" height="30" rx="3" fill="#1c1c1c" stroke="#555555" strokeWidth="2" />
      <rect x="38" y="22" width="5" height="10" fill="#1c1c1c" />
      <path d="M12 0v14l-6 8 12-4z" fill="#111111" />
    </svg>
    <div className="ml-auto mr-[20px] whitespace-nowrap text-right text-[29px] leading-[40px]">
      <div>6:58 PM</div>
      <div>9/30/2023</div>
    </div>
    <svg width="34" height="46" viewBox="0 0 34 46" className="mr-[54px]">
      <path d="M15 6c-6 0-9 6-9 14 0 6-2 8-4 10v2h26v-2c-2-2-4-4-4-10 0-3 0-5-1-7l-8-7z" fill="#111111" />
      <path d="M11 36h10l-5 7z" fill="#111111" />
      <text x="11" y="25" fontSize="14" fontWeight="700" fill="#ffffff">z</text>
      <text x="24" y="12" fontSize="14" fontWeight="700" fill="#111111">z</text>
    </svg>
  </div>
);

const Taskbar = () => (
  <div className="flex h-[120px] shrink-0 border-t-[3px] border-[#bfc4cc] bg-gradient-to-r from-[#cfe3ea] via-[#d7e2ec] to-[#e3edf6]">
    <div className="relative flex h-full w-[185px] shrink-0 items-center pl-[30px] pb-[3px]">
      <div className="h-[50px] w-[50px] translate-y-[6px] rounded-full bg-gradient-to-b from-[#f9b233] to-[#ef6c0a]" />
      <div className="absolute left-[45px] top-[14px] flex h-[40px] w-[60px] items-center justify-center rounded-full bg-[#f3f5f6] text-[26px] text-[#111111]">77°</div>
    </div>
    {taskIcons.map((t, i) => (
      <TaskIcon key={i} {...t} />
    ))}
    <div className="ml-[9px] border-l-2 border-[#d3dbe2] pl-[4px]" />
    <TaskIcon icon={<GitDiamond size={60} />} dot />
    <div className="flex h-full w-[110px] shrink-0 items-center justify-center gap-[6px] pb-[3px]">
      <span className="h-[10px] w-[8px] rounded-full bg-[#1c1c2c]" />
      <span className="h-[10px] w-[8px] rounded-full bg-[#1c1c2c]" />
      <span className="h-[10px] w-[8px] rounded-full bg-[#1c1c2c]" />
    </div>
    <div className="w-[6px] shrink-0" />
    <div className="flex flex-1 bg-gradient-to-r from-[#eaeaea] to-[#ececea]">
      <Tray />
    </div>
  </div>
);

export default function App() {
  return (
    <div className="flex h-[2160px] w-[3840px] flex-col overflow-hidden font-['Noto_Sans',sans-serif]">
      <TabBar />
      <NavBar />
      <MainArea />
      <FindBar />
      <Taskbar />
    </div>
  );
}
